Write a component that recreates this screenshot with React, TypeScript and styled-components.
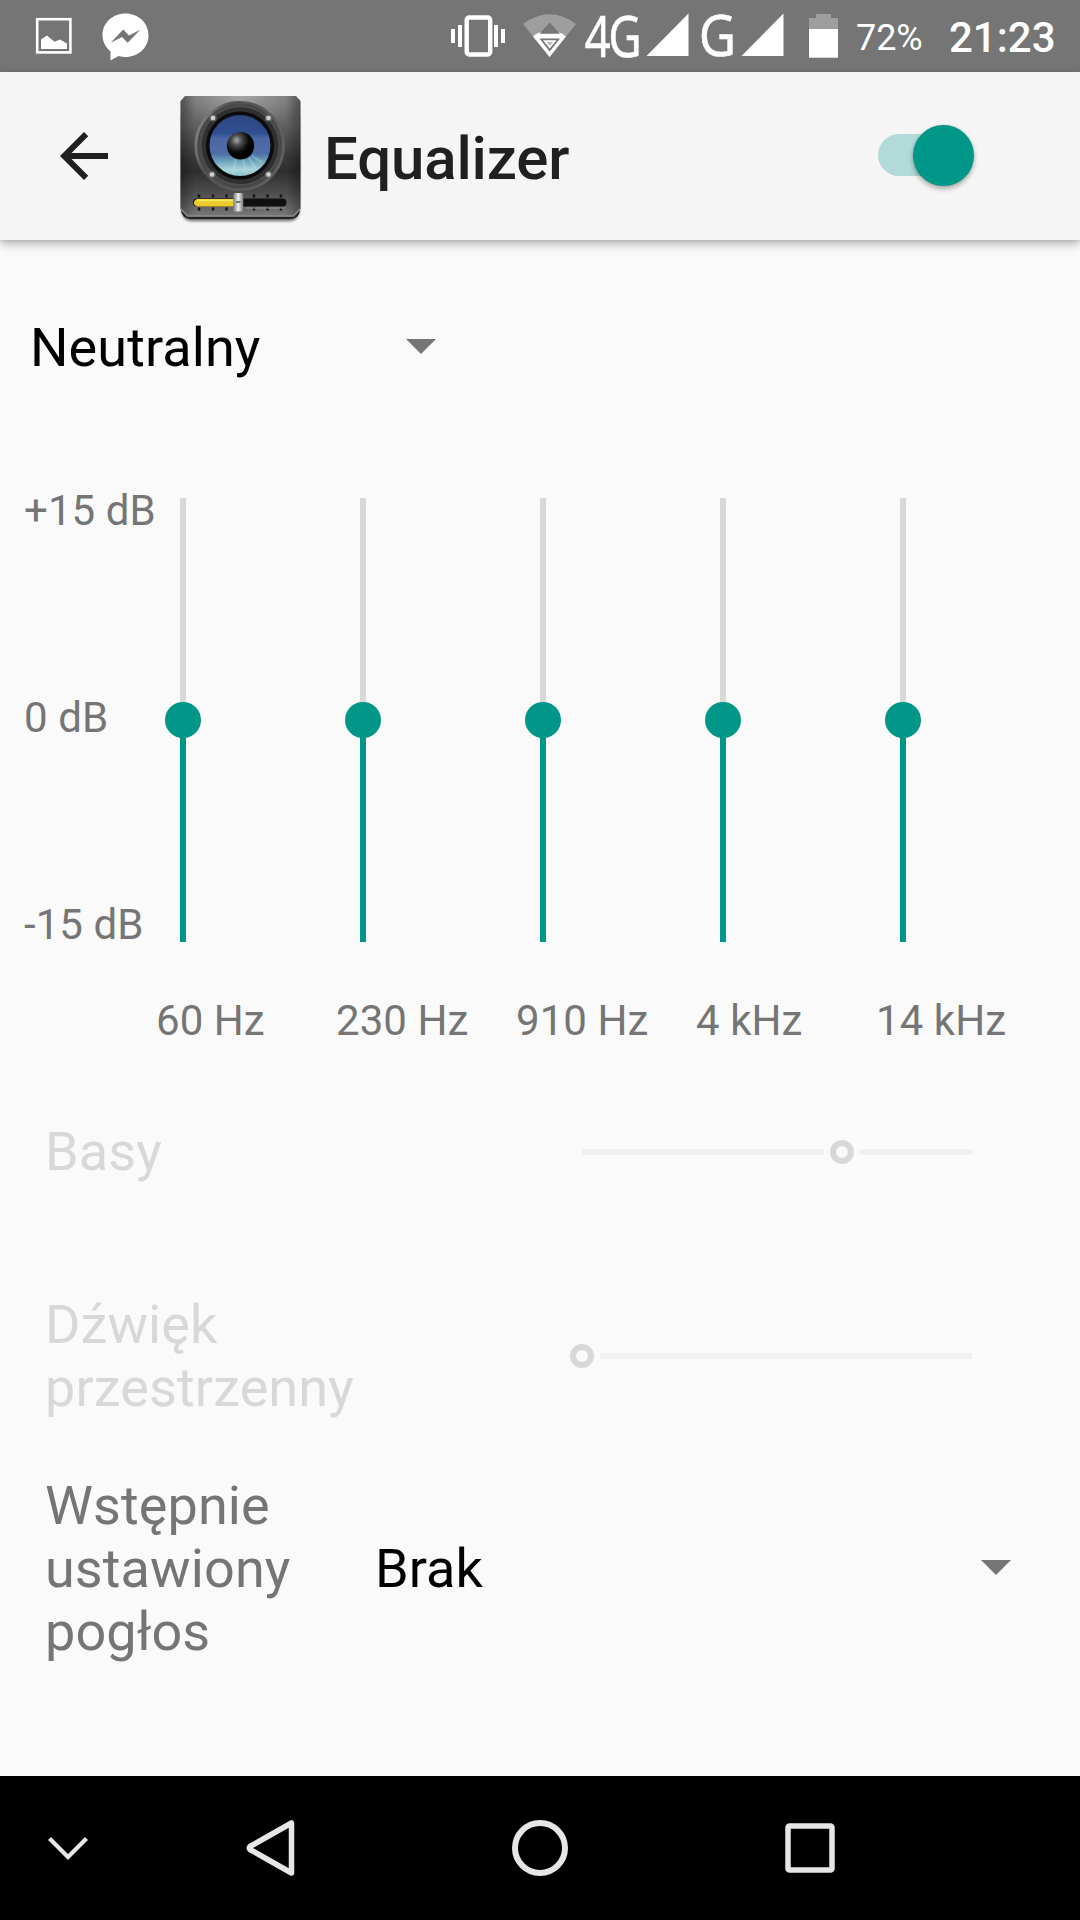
import React from "react";
import styled, { createGlobalStyle } from "styled-components";

const teal = "#009688";
const grey = "#757575";
const faded = "#d8d8d8";

const GlobalStyle = createGlobalStyle`
  * { box-sizing: border-box; }
  body { margin: 0; background: #fafafa; }
  svg { display: block; flex: none; }
`;

const Screen = styled.div`
  width: 1080px;
  height: 1920px;
  display: flex;
  flex-direction: column;
  overflow: hidden;
  background: #fafafa;
  font-family: Roboto, "Noto Sans", sans-serif;
`;

const StatusBar = styled.header`
  flex: none;
  height: 72px;
  display: flex;
  justify-content: space-between;
  background: ${grey};
  color: #fff;
`;

const StatusGroup = styled.div`
  display: flex;
  align-items: flex-start;
`;

const NetworkIcon = styled.svg`
  overflow: visible;
`;

const NetworkText = styled.text`
  fill: #fff;
  stroke: #fff;
  stroke-width: 0.5px;
  font-family: "Noto Sans", sans-serif;
`;

const Spacer = styled.span<{ $width: number }>`
  width: ${(p) => p.$width}px;
`;

const BatteryLevel = styled.span`
  width: 93px;
  margin-top: 14px;
  font-size: 36px;
  line-height: 48px;
  letter-spacing: -0.1px;
`;

const Clock = styled.span`
  width: 131px;
  margin-top: 13px;
  font-size: 42px;
  font-weight: 500;
  line-height: 49px;
`;

const AppBar = styled.div`
  flex: none;
  height: 168px;
  display: flex;
  align-items: center;
  padding-left: 48px;
  background: #f5f5f5;
  box-shadow: 0 4px 10px rgba(0, 0, 0, 0.28), 0 1px 3px rgba(0, 0, 0, 0.1);
  z-index: 1;
`;

const AppIcon = styled.svg`
  margin-left: 48px;
`;

const Title = styled.h1`
  flex: 1;
  margin: 6px 0 0 12px;
  color: #202020;
  font-size: 60px;
  font-weight: 500;
  line-height: 70px;
  letter-spacing: -0.15px;
`;

const Switch = styled.button`
  width: 96px;
  height: 42px;
  margin: 0 106px 2px 0;
  padding: 0;
  display: flex;
  align-items: center;
  justify-content: flex-end;
  border: 0;
  border-radius: 21px;
  background: linear-gradient(90deg, #b2dad8 70px, transparent 70px);
`;

const SwitchThumb = styled.span`
  flex: none;
  width: 61px;
  height: 61px;
  border-radius: 50%;
  background: ${teal};
  box-shadow: 0 3px 5px rgba(0, 0, 0, 0.3), 0 0 2px rgba(0, 0, 0, 0.15);
`;

const Main = styled.main`
  flex: 1;
  display: flex;
  flex-direction: column;
  padding-top: 76px;
`;

const Select = styled.div<{ $width: number }>`
  width: ${(p) => p.$width}px;
  display: flex;
  align-items: center;
  justify-content: space-between;
  color: #000;
  font-size: 54px;
  line-height: 63px;
  letter-spacing: 0.08px;
`;

const Caret = styled.span`
  border: 15px solid transparent;
  border-top-color: ${grey};
  border-bottom: 0;
  margin-bottom: 2px;
`;

const PresetRow = styled.div`
  padding-left: 30px;
`;

const Equalizer = styled.section`
  display: flex;
  margin-top: 107px;
  padding-left: 24px;
  color: ${grey};
  font-size: 42px;
  line-height: 50px;
  letter-spacing: 0.07px;
`;

const Scale = styled.div`
  width: 132px;
  height: 464px;
  display: flex;
  flex-direction: column;
  justify-content: space-between;
  white-space: nowrap;
`;

const Band = styled.div`
  width: 180px;
  height: 560px;
  padding-top: 12px;
  display: flex;
  flex-direction: column;
  justify-content: space-between;
  white-space: nowrap;
`;

const BandSlider = styled.div`
  width: 54px;
  height: 444px;
  display: flex;
  flex-direction: column;
  align-items: center;
`;

const BandTrack = styled.span<{ $active?: boolean }>`
  flex: 1;
  width: 6px;
  background: ${(p) => (p.$active ? teal : faded)};
`;

const BandThumb = styled.span`
  width: 36px;
  height: 36px;
  margin: -1px 0;
  border-radius: 50%;
  background: ${teal};
`;

const Setting = styled.div<{ $gap: number; $disabled?: boolean }>`
  display: flex;
  align-items: center;
  margin-top: ${(p) => p.$gap}px;
  padding-left: 45px;
  color: ${(p) => (p.$disabled ? faded : grey)};
  font-size: 54px;
  line-height: 63px;
  letter-spacing: 0.1px;
`;

const SettingLabel = styled.div<{ $width: number }>`
  width: ${(p) => p.$width}px;
  white-space: pre-line;
`;

const SeekBar = styled.div<{ $atStart?: boolean }>`
  width: ${(p) => (p.$atStart ? 402 : 390)}px;
  display: flex;
  align-items: center;
  gap: 6px;
  margin-left: ${(p) => (p.$atStart ? 0 : 12)}px;
`;

const SeekTrack = styled.span<{ $grow: number }>`
  flex: ${(p) => p.$grow} 0 0;
  height: 6px;
  background: #f0f0f0;
`;

const SeekThumb = styled.span`
  width: 24px;
  height: 24px;
  border: 6px solid ${faded};
  border-radius: 50%;
`;

const NavBar = styled.nav`
  flex: none;
  height: 144px;
  display: flex;
  align-items: center;
  background: #000;
`;

const NavButton = styled.button<{ $width: number }>`
  width: ${(p) => p.$width}px;
  height: 144px;
  padding: 0;
  display: flex;
  align-items: center;
  justify-content: center;
  border: 0;
  background: none;
`;

const bands = ["60 Hz", "230 Hz", "910 Hz", "4 kHz", "14 kHz"];

function NotificationIcons() {
  return (
    <svg width="160" height="72" viewBox="0 0 160 72">
      <rect x="37.2" y="19.2" width="33.2" height="33.2" fill="none" stroke="#fff" strokeWidth="2.6" />
      <path d="M41 49V39.5L47 35.5L54.5 41.8L60 39.5L67 43.5V49Z" fill="#fff" />
      <path
        fill="#fff"
        fillRule="evenodd"
        d="M125.5 13.5C112.5 13.5 102.5 23 102.5 35C102.5 41.5 105.5 47.3 110.5 51.3V60.5L118.5 56.1C120.7 56.7 123 57 125.5 57C138.5 57 148.5 47.5 148.5 35.5C148.5 23 138.5 13.5 125.5 13.5ZM110.7 42.7L123.2 29.5L129 35.4L140.2 29.7L127.7 42.7L122 36.9Z"
      />
    </svg>
  );
}

function VibrateAndWifi() {
  return (
    <svg width="134" height="72" viewBox="450 0 134 72">
      <rect x="466.7" y="17.5" width="23.5" height="37" rx="2.5" fill="none" stroke="#fff" strokeWidth="4.4" />
      <path d="M451 29h4v14h-4zM458 25h4v22h-4zM494 25h4v22h-4zM501 29h4v14h-4z" fill="#fff" />
      <path d="M523 24Q549.5 4.5 576 24L549.6 57Z" fill="#fff" opacity=".3" />
      <path d="M533 36.5Q536 33 541.5 32H558Q563 33 566 36.5L549.6 57Z" fill="#fff" />
      <path d="M549.7 22.5L560 33.8H539.5Z" fill={grey} />
      <path d="M539.5 38.5H560L549.7 51.5Z" fill={grey} />
      <path d="M543 40.2H556.5L549.7 48.5Z" fill="#fff" />
      <path d="M546.5 42H553.2L549.7 46Z" fill="#bbb" />
    </svg>
  );
}

function Signal() {
  return (
    <svg width="43" height="72" viewBox="0 0 43 72">
      <path d="M.5 56L42.5 13.5V56Z" fill="#fff" />
    </svg>
  );
}

function Battery() {
  return (
    <svg width="29" height="72" viewBox="0 0 29 72">
      <path d="M0 18H7V14H22V18H29V29H0Z" fill="#fff" opacity=".3" />
      <path d="M0 29H29V57.7H0Z" fill="#fff" />
    </svg>
  );
}

const screws = [
  [213, 118],
  [268.5, 118],
  [212, 174.5],
  [268.5, 174.5],
];
const ticks = [199, 213, 226.5, 254, 267.5, 281];

function SpeakerIcon() {
  return (
    <AppIcon width="144" height="144" viewBox="168 84 144 144">
      <defs>
        <linearGradient id="body" x2="0" y2="1">
          <stop offset="0" stopColor="#777" />
          <stop offset=".25" stopColor="#606060" />
          <stop offset=".5" stopColor="#3a3a3a" />
          <stop offset=".62" stopColor="#2e2e2e" />
          <stop offset=".8" stopColor="#4c4c4c" />
          <stop offset="1" stopColor="#787878" />
        </linearGradient>
        <radialGradient id="sheen" cx=".5" cy="0" r=".5">
          <stop offset="0" stopColor="#fff" stopOpacity=".35" />
          <stop offset="1" stopColor="#fff" stopOpacity="0" />
        </radialGradient>
        <linearGradient id="edge">
          <stop offset="0" stopColor="#000" stopOpacity=".3" />
          <stop offset=".12" stopColor="#000" stopOpacity="0" />
          <stop offset=".88" stopColor="#000" stopOpacity="0" />
          <stop offset="1" stopColor="#000" stopOpacity=".3" />
        </linearGradient>
        <linearGradient id="rim" x2="1" y2=".4">
          <stop offset="0" stopColor="#999" />
          <stop offset=".35" stopColor="#505050" />
          <stop offset="1" stopColor="#606060" />
        </linearGradient>
        <linearGradient id="cone" x2="0" y2="1">
          <stop offset="0" stopColor="#2e477e" />
          <stop offset=".3" stopColor="#304f91" />
          <stop offset=".38" stopColor="#4b66a5" />
          <stop offset=".64" stopColor="#4f6ea8" />
          <stop offset=".75" stopColor="#6ba1b9" />
          <stop offset=".9" stopColor="#acd4da" />
          <stop offset="1" stopColor="#8cc0cc" />
        </linearGradient>
        <radialGradient id="cap" cx=".36" cy=".3" r=".55">
          <stop offset="0" stopColor="#aaa" />
          <stop offset=".35" stopColor="#4b4b4b" />
          <stop offset=".8" stopColor="#090909" />
          <stop offset="1" stopColor="#000" />
        </radialGradient>
        <linearGradient id="knob">
          <stop offset="0" stopColor="#777" />
          <stop offset=".5" stopColor="#eee" />
          <stop offset="1" stopColor="#777" />
        </linearGradient>
        <filter id="soft" x="-10%" y="-10%" width="120%" height="120%">
          <feGaussianBlur stdDeviation="1.8" />
        </filter>
      </defs>
      <rect x="182" y="110" width="117" height="111" rx="9" fill="#000" opacity=".6" filter="url(#soft)" />
      <rect x="181" y="110" width="119" height="109" rx="9" fill="#222" />
      <path d="M185 96H296L300.5 101V209L294 216.5H187L180.5 209V101Z" fill="url(#body)" />
      <path d="M185 96H296L300.5 101V209L294 216.5H187L180.5 209V101Z" fill="url(#edge)" />
      <rect x="182" y="96" width="117" height="80" fill="url(#sheen)" />
      <path d="M180.9 209L187.5 216H293.5L300.1 209" fill="none" stroke="#8a8a8a" strokeWidth="1.5" />
      <circle cx="239.7" cy="146" r="43.8" fill="#484848" stroke="url(#rim)" strokeWidth="2.6" />
      <circle cx="240" cy="145.7" r="39" fill="#303030" stroke="#505050" strokeWidth="1.2" />
      <circle cx="240" cy="145.5" r="34" fill="#0b0b0d" />
      <circle cx="240" cy="145.5" r="30.5" fill="url(#cone)" />
      <path d="M243 159L246 173M249 158L256 169M236 159L233 174M252 156L262 162" stroke="#b9e3e4" strokeWidth="2.5" opacity=".3" />
      <circle cx="240.5" cy="145.7" r="13.7" fill="url(#cap)" />
      {screws.map(([x, y]) => (
        <g key={`${x}-${y}`}>
          <circle cx={x} cy={y} r="3.6" fill="#666" />
          <circle cx={x} cy={y} r="2.3" fill="#d0d0d0" />
        </g>
      ))}
      {ticks.map((x) => (
        <path key={x} d={`M${x} 194.5v3M${x} 207.5v3`} stroke="#151515" strokeWidth="2.5" />
      ))}
      <rect x="193" y="198.5" width="93.5" height="8" rx="4" fill="#101010" />
      <path d="M246 208H284" stroke="#999" strokeWidth="1.2" />
      <path d="M197 199H235V206.5H197Q194 205.5 193.8 202.7Q194 200 197 199Z" fill="#ebcb2b" />
      <path d="M197 200.3H235" stroke="#f7e95e" strokeWidth="1.8" />
      <rect x="233.3" y="193" width="10" height="18.5" rx="1.5" fill="url(#knob)" />
      <path d="M236 202H240.5" stroke="#777" strokeWidth="2" />
    </AppIcon>
  );
}

export default function App() {
  return (
    <Screen>
      <GlobalStyle />
      <StatusBar>
        <NotificationIcons />
        <StatusGroup>
          <VibrateAndWifi />
          <NetworkIcon width="62" height="72" viewBox="584 0 62 72">
            <NetworkText fontSize="56" letterSpacing="-3" transform="translate(584.5 57) scale(.82 1)">4G</NetworkText>
          </NetworkIcon>
          <Signal />
          <NetworkIcon width="52" height="72" viewBox="689 0 52 72">
            <NetworkText fontSize="57" transform="translate(698.8 56.4) scale(.9 1)">G</NetworkText>
          </NetworkIcon>
          <Signal />
          <Spacer $width={25} />
          <Battery />
          <Spacer $width={18} />
          <BatteryLevel>72%</BatteryLevel>
          <Clock>21:23</Clock>
        </StatusGroup>
      </StatusBar>

      <AppBar>
        <svg width="72" height="72" viewBox="0 0 24 24" fill="#202020">
          <path d="M20 11H7.83l5.59-5.59L12 4l-8 8 8 8 1.41-1.41L7.83 13H20v-2z" />
        </svg>
        <SpeakerIcon />
        <Title>Equalizer</Title>
        <Switch role="switch" aria-checked="true">
          <SwitchThumb />
        </Switch>
      </AppBar>

      <Main>
        <PresetRow>
          <Select $width={406}>
            Neutralny
            <Caret />
          </Select>
        </PresetRow>

        <Equalizer>
          <Scale>
            <span>+15 dB</span>
            <span>0 dB</span>
            <span>-15 dB</span>
          </Scale>
          {bands.map((band) => (
            <Band key={band}>
              <BandSlider>
                <BandTrack />
                <BandThumb />
                <BandTrack $active />
              </BandSlider>
              <span>{band}</span>
            </Band>
          ))}
        </Equalizer>

        <Setting $gap={74} $disabled>
          <SettingLabel $width={525}>Basy</SettingLabel>
          <SeekBar>
            <SeekTrack $grow={242} />
            <SeekThumb />
            <SeekTrack $grow={112} />
          </SeekBar>
        </Setting>
        <Setting $gap={110} $disabled>
          <SettingLabel $width={525}>{"Dźwięk\nprzestrzenny"}</SettingLabel>
          <SeekBar $atStart>
            <SeekThumb />
            <SeekTrack $grow={1} />
          </SeekBar>
        </Setting>
        <Setting $gap={55}>
          <SettingLabel $width={330}>{"Wstępnie\nustawiony\npogłos"}</SettingLabel>
          <Select $width={636}>
            Brak
            <Caret />
          </Select>
        </Setting>
      </Main>

      <NavBar>
        <NavButton $width={136} aria-label="Ukryj">
          <svg width="44" height="26" viewBox="0 0 44 26" fill="none" stroke="#e6e6e6" strokeWidth="4.2">
            <path d="M3.5 3.5L22 22L40.5 3.5" />
          </svg>
        </NavButton>
        <NavButton $width={269} aria-label="Wstecz">
          <svg width="60" height="60" viewBox="0 0 60 60" fill="none" stroke="#e6e6e6" strokeWidth="5.5" strokeLinejoin="round">
            <path d="M50.5 5V55L9 31.5Q7.5 30 9 28.5Z" />
          </svg>
        </NavButton>
        <NavButton $width={270} aria-label="Ekran główny">
          <svg width="60" height="60" viewBox="0 0 60 60" fill="none" stroke="#e6e6e6" strokeWidth="6">
            <circle cx="30" cy="30" r="25" />
          </svg>
        </NavButton>
        <NavButton $width={270} aria-label="Ostatnie">
          <svg width="60" height="60" viewBox="0 0 60 60" fill="none" stroke="#e6e6e6" strokeWidth="5.5">
            <rect x="8" y="8" width="44" height="44" rx="1.5" />
          </svg>
        </NavButton>
      </NavBar>
    </Screen>
  );
}
